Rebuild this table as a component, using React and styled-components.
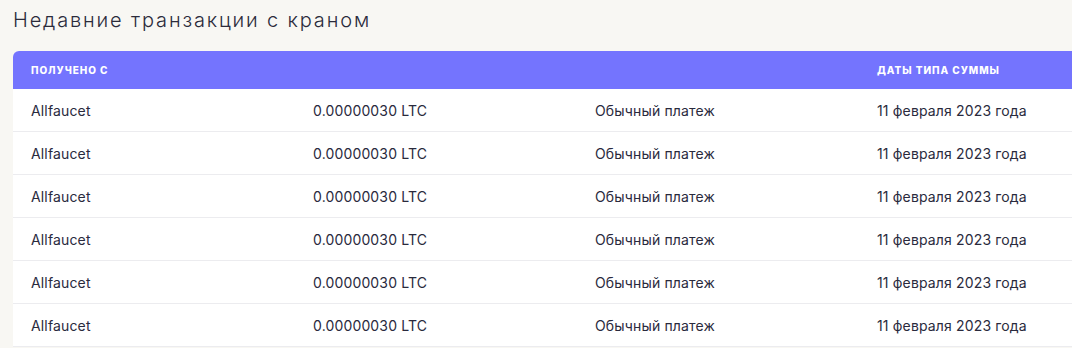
import React from "react";
import styled, { createGlobalStyle } from "styled-components";

const rows = Array.from({ length: 6 }, (_, i) => ({
  id: i,
  from: "Allfaucet",
  amount: "0.00000030 LTC",
  type: "Обычный платеж",
  date: "11 февраля 2023 года",
}));

export default function App() {
  return (
    <>
      <GlobalStyle />
      <Page>
        <Title>Недавние транзакции с краном</Title>
        <Table>
          <HeadRow>
            <HeadCell>Получено с</HeadCell>
            <HeadCell />
            <HeadCell />
            <HeadCell>Даты типа суммы</HeadCell>
          </HeadRow>
          {rows.map(row => (
            <Row key={row.id}>
              <Cell>{row.from}</Cell>
              <Cell>{row.amount}</Cell>
              <Cell>{row.type}</Cell>
              <Cell>{row.date}</Cell>
            </Row>
          ))}
        </Table>
      </Page>
    </>
  );
}

const GlobalStyle = createGlobalStyle`
  body {
    margin: 0;
    background: #f8f7f3;
    font-family: Inter, "Noto Sans", sans-serif;
    overflow: hidden;
  }
`;

const Page = styled.div`
  padding: 6px 0 0 13px;
  width: 100vw;
  box-sizing: border-box;
  overflow: hidden;
`;

const Title = styled.h2`
  margin: 0 0 17px;
  font-size: 20px;
  font-weight: 300;
  letter-spacing: 1.85px;
  line-height: 28px;
  color: #2b2b3b;
`;

const Table = styled.div`
  width: 1128px;
  background: #fff;
  border-radius: 6px 6px 0 0;
  overflow: hidden;
`;

const HeadRow = styled.div`
  display: grid;
  grid-template-columns: repeat(4, 282px);
  height: 38px;
  align-items: center;
  background: #7474fe;
`;

const HeadCell = styled.div`
  padding-left: 18px;
  font-size: 10px;
  font-weight: 800;
  letter-spacing: 0.95px;
  text-transform: uppercase;
  color: #fff;
`;

const Row = styled.div`
  display: grid;
  grid-template-columns: repeat(4, 282px);
  height: 42px;
  align-items: center;
  border-bottom: 1px solid #ececef;
`;

const Cell = styled.div`
  padding-left: 18px;
  font-size: 14px;
  letter-spacing: 0.15px;
  color: #2a2a3d;
`;
